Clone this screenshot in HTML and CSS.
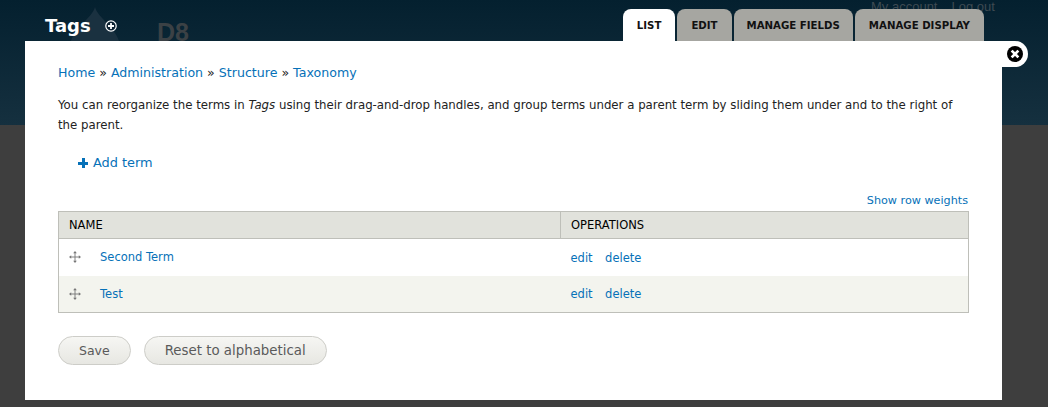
FILE: index.html
```html
<!DOCTYPE html>
<html lang="en">
<head>
<meta charset="utf-8">
<title>Tags</title>
<link rel="stylesheet" href="styles.css">
</head>
<body>
<div class="backdrop">
  <div class="site-header">
    <svg class="drop" viewBox="0 0 60 60" aria-hidden="true"><path d="M30 0C32 10 52 20 54 38C55 50 44 58 30 58C16 58 5 50 6 38C8 20 28 10 30 0Z"/></svg>
    <span class="site-name">D8</span>
    <nav class="user-menu"><span>My account</span><span>Log out</span></nav>
  </div>
</div>
<div class="overlay-top">
  <div class="title-wrap">
    <h1 class="title">Tags</h1>
    <svg class="shortcut" viewBox="0 0 12 12" aria-hidden="true"><circle cx="6" cy="6" r="5.2" fill="#0a2030" stroke="#fff" stroke-width="1.2"/><path d="M6 3v6M3 6h6" stroke="#fff" stroke-width="1.8"/></svg>
  </div>
  <ul class="tabs">
    <li class="tab active">LIST</li>
    <li class="tab">EDIT</li>
    <li class="tab tab-tight">MANAGE FIELDS</li>
    <li class="tab">MANAGE DISPLAY</li>
  </ul>
</div>
<main class="dialog">
  <a class="close" href="#" aria-label="Close">
    <svg viewBox="0 0 20 20" aria-hidden="true"><circle cx="10" cy="10" r="10" fill="#000"/><path d="M5.8 5.8l8.4 8.4M14.2 5.8l-8.4 8.4" stroke="#fff" stroke-width="3.4"/></svg>
  </a>
  <div class="breadcrumb"><a href="#">Home</a> » <a href="#">Administration</a> » <a href="#">Structure</a> » <a href="#">Taxonomy</a></div>
  <p class="help">You can reorganize the terms in <em>Tags</em> using their drag-and-drop handles, and group terms under a parent term by sliding them under and to the right of the parent.</p>
  <div class="actions"><span class="plus" aria-hidden="true"></span><a href="#">Add term</a></div>
  <div class="weights"><a href="#">Show row weights</a></div>
  <table class="terms">
    <thead><tr><th class="col-name">NAME</th><th>OPERATIONS</th></tr></thead>
    <tbody>
      <tr>
        <td><span class="term"><svg class="handle" viewBox="0 0 13 13" aria-hidden="true"><path d="M6.5 1.5v10M1.5 6.5h10" stroke="#777" stroke-width="1"/><path d="M6.5 0l2 2.4h-4zM6.5 13l2-2.4h-4zM0 6.5l2.4-2v4zM13 6.5l-2.4-2v4z" fill="#777"/></svg><a href="#">Second Term</a></span></td>
        <td class="ops"><a href="#">edit</a><a href="#">delete</a></td>
      </tr>
      <tr class="even">
        <td><span class="term"><svg class="handle" viewBox="0 0 13 13" aria-hidden="true"><path d="M6.5 1.5v10M1.5 6.5h10" stroke="#777" stroke-width="1"/><path d="M6.5 0l2 2.4h-4zM6.5 13l2-2.4h-4zM0 6.5l2.4-2v4zM13 6.5l-2.4-2v4z" fill="#777"/></svg><a href="#">Test</a></span></td>
        <td class="ops"><a href="#">edit</a><a href="#">delete</a></td>
      </tr>
    </tbody>
  </table>
  <div class="buttons">
    <button class="btn" type="button">Save</button>
    <button class="btn btn-wide" type="button">Reset to alphabetical</button>
  </div>
</main>
</body>
</html>
```
FILE: styles.css
```css
* { box-sizing: border-box; }
html, body { margin: 0; padding: 0; }
body {
  width: 1048px;
  height: 407px;
  overflow: hidden;
  position: relative;
  background: #3e3e3e;
  font-family: "DejaVu Sans", "Liberation Sans", sans-serif;
  font-size: 12.6px;
  color: #222;
}
a { color: #0671b8; text-decoration: none; }

.backdrop { height: 125px; background: linear-gradient(#04202f, #15303f); }
.site-header { position: relative; height: 125px; overflow: hidden; }
.drop { position: absolute; left: 63px; top: 7px; width: 64px; height: 64px; fill: #1a3140; }
.site-name {
  position: absolute; left: 157px; top: 18px;
  font: bold 25px/28px "Liberation Sans", sans-serif;
  color: #3b4145;
}
.user-menu {
  position: absolute; left: 871px; top: 0;
  display: flex; gap: 14px;
  font: 13px/13px "Liberation Sans", sans-serif;
  color: #3e4a52;
}

.overlay-top {
  position: absolute; left: 25px; top: 0; width: 977px; height: 41px;
  display: flex; justify-content: space-between; align-items: flex-end;
}
.title-wrap { display: flex; align-items: center; gap: 14px; align-self: flex-start; margin: 13px 0 0 20px; }
.title { margin: 0; font: bold 18px/26px "DejaVu Sans", sans-serif; color: #fff; }
.shortcut { width: 12px; height: 12px; }
.tabs { list-style: none; margin: 0 18px 0 0; padding: 0; display: flex; gap: 2px; }
.tab {
  height: 32px; padding: 0 14px;
  display: flex; align-items: center;
  background: #a6a6a1;
  border-radius: 8px 8px 0 0;
  font-size: 10.2px; font-weight: bold; color: #111;
}
.tab-tight { padding: 0 13px; }
.active { background: #fff; }

.dialog {
  position: absolute; left: 25px; top: 41px; width: 977px; height: 359px;
  background: #fff;
  padding: 23px 33px 0;
}
.close {
  position: absolute; right: -26px; top: 0;
  width: 26px; height: 26px;
  background: #fff;
  border-radius: 0 13px 13px 0;
  display: flex; align-items: center; padding-left: 5px;
}
.close svg { width: 16px; height: 16px; }

.breadcrumb { line-height: 18px; }
.help { margin: 13px 0 0; line-height: 20px; font-size: 11.78px; color: #222; width: 911px; }
.actions { display: flex; align-items: center; margin: 18px 0 0 20px; line-height: 20px; gap: 5px; font-size: 12.9px; }
.plus {
  width: 10px; height: 10px;
  background:
    linear-gradient(#0671b8, #0671b8) center / 10px 3px no-repeat,
    linear-gradient(#0671b8, #0671b8) center / 3px 10px no-repeat;
}
.weights { text-align: right; margin-top: 20px; line-height: 16px; font-size: 11.2px; padding-right: 1px; }

.terms {
  width: 911px; margin-top: 2px;
  border-collapse: collapse;
  border: 1px solid #bebfb9;
  font-size: 11.5px;
}
.terms th {
  height: 27px; padding: 0 10px;
  background: #e1e2dc;
  border-bottom: 1px solid #bebfb9;
  text-align: left; font-weight: normal; color: #000;
}
.col-name { width: 502px; border-right: 1px solid #bebfb9; }
.terms td { height: 37px; padding: 1px 10px 0; }
.even td { background: #f3f4ee; height: 37px; }
.term { display: flex; align-items: center; gap: 19px; position: relative; top: -1px; }
.even .term { top: 0; }
.handle { width: 12px; height: 12px; }
.ops a { margin-right: 12.5px; }

.buttons { display: flex; gap: 13px; margin-top: 23px; }
.btn {
  height: 29px; padding: 0 20px;
  border: 1px solid #cdcdc8;
  border-radius: 15px;
  background: linear-gradient(#f6f6f3, #e7e7e2);
  font-family: "DejaVu Sans", sans-serif; font-size: 12.5px;
  color: #5a5a5a;
}
.btn-wide { font-size: 13.35px; }
```
